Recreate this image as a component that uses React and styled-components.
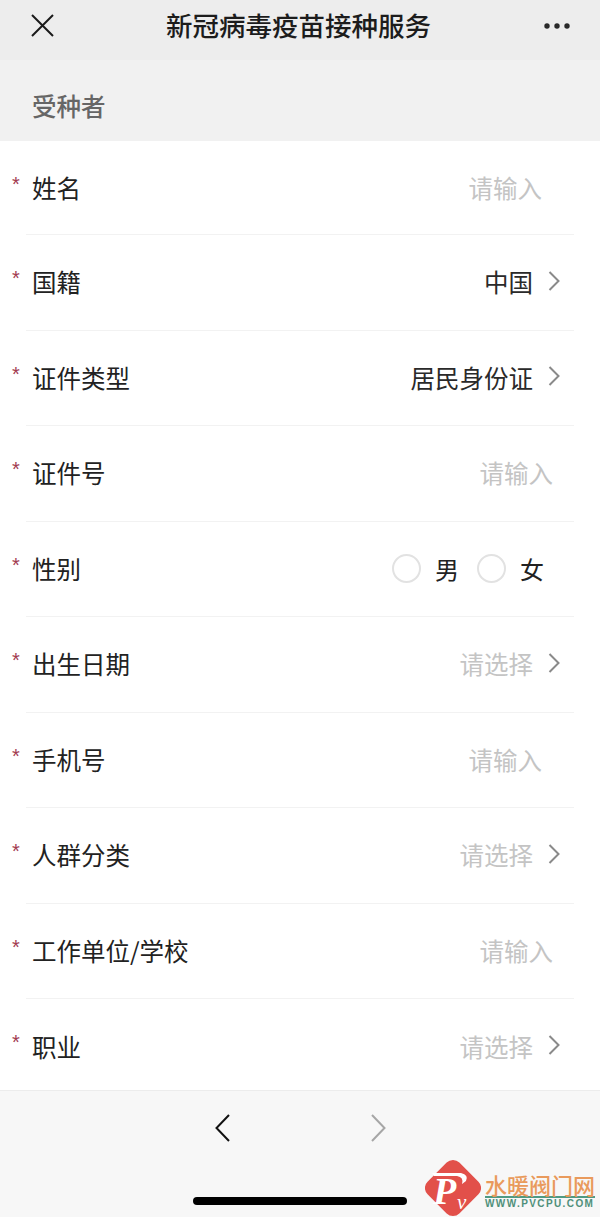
import React from "react";
import styled, { createGlobalStyle } from "styled-components";

const GlobalStyle = createGlobalStyle`
  html, body {
    margin: 0;
    padding: 0;
    background: #fff;
  }
  body {
    font-family: "Noto Sans CJK SC", "Liberation Sans", sans-serif;
  }
`;

const Page = styled.div`
  width: 600px;
  height: 1217px;
  display: flex;
  flex-direction: column;
  overflow: hidden;
`;

const NavBar = styled.header`
  height: 60px;
  flex: none;
  display: grid;
  grid-template-columns: 87px 1fr 90px;
  align-items: center;
  background: #ededed;
  padding-bottom: 8px;
  box-sizing: border-box;
`;

const NavIcon = styled.div`
  display: flex;
  justify-content: ${(p) => (p.$end ? "flex-end" : "flex-start")};
  padding: ${(p) => (p.$end ? "0 29px 0 0" : "0 0 0 27px")};
`;

const NavTitle = styled.h1`
  margin: -3px 0 0;
  text-align: center;
  font-size: 26.5px;
  line-height: 36px;
  font-weight: 500;
  color: #1c1c1c;
  white-space: nowrap;
`;

const SectionHead = styled.div`
  height: 81px;
  flex: none;
  box-sizing: border-box;
  padding: 28px 0 0 32px;
  background: #f1f1f1;
  font-size: 24.5px;
  line-height: 36px;
  font-weight: 500;
  color: #666;
`;

const Form = styled.div`
  flex: 1;
  min-height: 0;
  overflow: hidden;
  background: #fff;
`;

const Row = styled.div`
  position: relative;
  height: 95.5px;
  box-sizing: border-box;
  margin: 0 26px;
  padding: 0 14px 0 6px;
  display: flex;
  align-items: center;
  justify-content: space-between;
  border-bottom: ${(p) => (p.$last ? "none" : "1px solid #f2f2f2")};

  &:first-child {
    height: 94px;
  }
`;

const Star = styled.span`
  position: absolute;
  left: -14px;
  top: 33px;
  font-size: 20px;
  line-height: 20px;
  color: #a23a50;
  font-family: "Liberation Sans", sans-serif;
`;

const Label = styled.span`
  font-size: 24.5px;
  line-height: 36px;
  color: #222;
`;

const Value = styled.div`
  display: flex;
  align-items: center;
  gap: 15px;
  font-size: 24.5px;
  line-height: 36px;
  color: ${(p) => (p.$muted ? "#c4c4c4" : "#2a2a2a")};
  padding-right: ${(p) => p.$pad || 0}px;
`;

const ChevronWrap = styled.span`
  display: flex;
  margin-top: -3px;
`;

const RadioGroup = styled.div`
  display: flex;
  align-items: center;
  padding-right: 16px;
  font-size: 24px;
  line-height: 36px;
  color: #222;
`;

const RadioCircle = styled.span`
  width: 29px;
  height: 29px;
  box-sizing: border-box;
  border: 2.5px solid #e2e2e2;
  border-radius: 50%;
  margin-left: ${(p) => p.$gap || 0}px;
  margin-right: 14px;
`;

const Footer = styled.footer`
  position: relative;
  height: 127px;
  flex: none;
  background: #f7f7f7;
  border-top: 1px solid #ececec;
  box-sizing: border-box;
`;

const Arrows = styled.div`
  display: flex;
  justify-content: center;
  gap: 141px;
  padding-top: 23px;
`;

const HomeBar = styled.div`
  position: absolute;
  left: 193px;
  top: 106px;
  width: 214px;
  height: 8px;
  border-radius: 4px;
  background: #000;
`;

const Watermark = styled.div`
  position: absolute;
  left: 425px;
  top: 68px;
  display: flex;
  align-items: flex-start;
  gap: 4px;
`;

const WmText = styled.div`
  display: flex;
  flex-direction: column;
  padding-top: 13px;
`;

const WmName = styled.span`
  font-size: 22px;
  line-height: 24px;
  width: 110px;
  white-space: nowrap;
  color: #e99a5c;
  font-weight: 500;
  border-bottom: 2px solid #4f9a83;
`;

const WmUrl = styled.span`
  font-family: "Liberation Sans", sans-serif;
  font-size: 10px;
  line-height: 12px;
  font-weight: 700;
  letter-spacing: 1.4px;
  color: #4f8f7a;
  white-space: nowrap;
`;

const Chevron = () => (
  <ChevronWrap>
    <svg width="12" height="20" viewBox="0 0 12 20" fill="none">
      <path d="M1.5 1 L10.5 10 L1.5 19" stroke="#8a8a8a" strokeWidth="2" />
    </svg>
  </ChevronWrap>
);

const rows = [
  { label: "姓名", value: "请输入", muted: true, pad: 18 },
  { label: "国籍", value: "中国", chevron: true },
  { label: "证件类型", value: "居民身份证", chevron: true },
  { label: "证件号", value: "请输入", muted: true, pad: 7 },
  { label: "性别", radio: true },
  { label: "出生日期", value: "请选择", muted: true, chevron: true },
  { label: "手机号", value: "请输入", muted: true, pad: 18 },
  { label: "人群分类", value: "请选择", muted: true, chevron: true },
  { label: "工作单位/学校", value: "请输入", muted: true, pad: 7 },
  { label: "职业", value: "请选择", muted: true, chevron: true },
];

export default function App() {
  return (
    <Page>
      <GlobalStyle />
      <NavBar>
        <NavIcon>
          <svg width="32" height="32" viewBox="0 0 32 32" fill="none">
            <path d="M5 5 L26 26 M26 5 L5 26" stroke="#1a1a1a" strokeWidth="2" />
          </svg>
        </NavIcon>
        <NavTitle>新冠病毒疫苗接种服务</NavTitle>
        <NavIcon $end>
          <svg width="28" height="8" viewBox="0 0 28 8" fill="#2a2a2a">
            <circle cx="4" cy="4" r="2.7" />
            <circle cx="14" cy="4" r="2.7" />
            <circle cx="24" cy="4" r="2.7" />
          </svg>
        </NavIcon>
      </NavBar>
      <SectionHead>受种者</SectionHead>
      <Form>
        {rows.map((r, i) => (
          <Row key={r.label} $last={i === rows.length - 1}>
            <Star>*</Star>
            <Label>{r.label}</Label>
            {r.radio ? (
              <RadioGroup>
                <RadioCircle />
                男
                <RadioCircle $gap={18} />
                女
              </RadioGroup>
            ) : (
              <Value $muted={r.muted} $pad={r.pad}>
                {r.value}
                {r.chevron && <Chevron />}
              </Value>
            )}
          </Row>
        ))}
      </Form>
      <Footer>
        <Arrows>
          <svg width="15" height="28" viewBox="0 0 15 28" fill="none">
            <path d="M14 1 L1.5 14 L14 27" stroke="#111" strokeWidth="2" />
          </svg>
          <svg width="15" height="28" viewBox="0 0 15 28" fill="none">
            <path d="M1 1 L13.5 14 L1 27" stroke="#a6a6a6" strokeWidth="2" />
          </svg>
        </Arrows>
        <HomeBar />
        <Watermark>
          <svg width="56" height="58" viewBox="0 0 56 58">
            <rect x="5.5" y="6.5" width="45" height="45" rx="9" transform="rotate(45 28 29)" fill="#e2504a" />
            <path d="M7 14 H36 Q44 16 41 22 L37 25 Q39 18 32 17 H9 Z" fill="#fff" />
            <text x="8" y="45" fontFamily="Liberation Serif" fontStyle="italic" fontWeight="700" fontSize="38" fill="#fff">P</text>
            <text x="32" y="50" fontFamily="Liberation Serif" fontStyle="italic" fontSize="21" fill="#fff">v</text>
          </svg>
          <WmText>
            <WmName>水暖阀门网</WmName>
            <WmUrl>WWW.PVCPU.COM</WmUrl>
          </WmText>
        </Watermark>
      </Footer>
    </Page>
  );
}
